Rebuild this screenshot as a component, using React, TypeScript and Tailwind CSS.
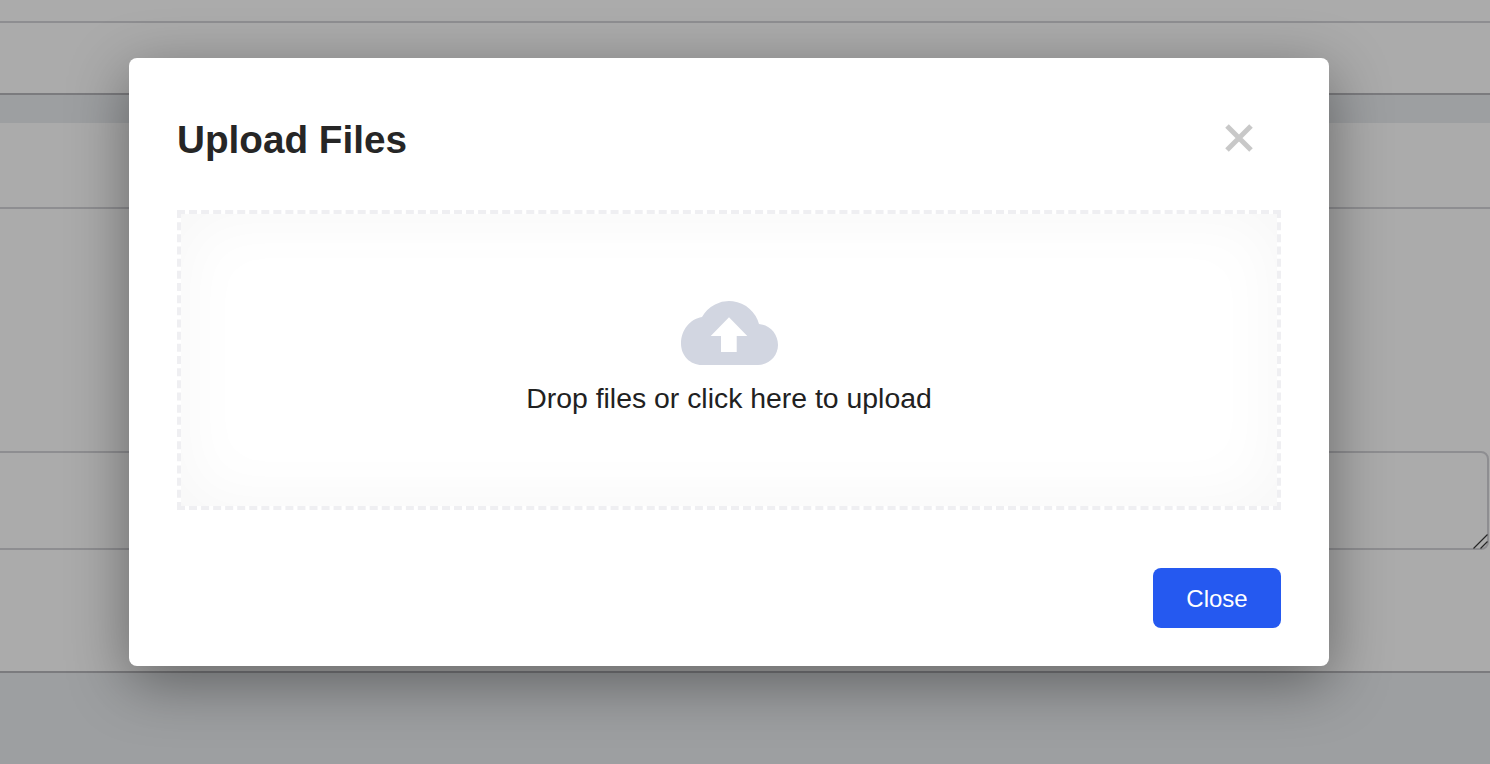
import React from "react"

const CloudIcon = () => (
    <svg width="97" height="65" viewBox="0 0 97 65" className="block">
        <path
            d="M21 65 C9 65 0 55.5 0 43.5 C0 30 9 19 21 17 A31 31 0 0 1 78 24 C89 25 97 34 97 45 C97 56 88 65 77 65 Z"
            fill="#d2d6e1"
        />
        <path d="M48 17.3 L66.3 36 H55.7 V52 H40 V36 H29.7 Z" fill="#ffffff" />
    </svg>
)

const CloseIcon = () => (
    <svg width="30" height="30" viewBox="0 0 30 30" className="block">
        <path d="M3 3 L27 27 M27 3 L3 27" stroke="#c8c8c8" strokeWidth="5" />
    </svg>
)

const ResizeHandle = () => (
    <svg
        width="15"
        height="15"
        viewBox="0 0 15 15"
        className="absolute right-[2px] bottom-[1px]"
    >
        <path
            d="M0.5 14.5 L14.5 0.5 M7.5 14.5 L14.5 7.5"
            stroke="#3a3a3a"
            strokeWidth="1.2"
        />
    </svg>
)

const UploadModal = () => (
    <div className="absolute inset-0 bg-black/[0.33]">
        <div className="ml-[129px] mt-[58px] w-[1200px] h-[608px] bg-white rounded-lg px-12 pt-12 shadow-[0_16px_60px_rgba(0,0,0,0.4)]">
            <div className="flex items-start justify-between h-[104px]">
                <h2 className="text-[38.7px] leading-[64px] mt-[2px] font-bold text-[#262626]">
                    Upload Files
                </h2>
                <button className="mt-[17px] mr-[27px]">
                    <CloseIcon />
                </button>
            </div>
            <div className="h-[300px] border-4 border-dashed border-[#efeff2] shadow-[inset_0_0_70px_#f6f6f6] flex flex-col items-center pt-[86px]">
                <CloudIcon />
                <p className="mt-[15px] text-[28.4px] leading-[36px] text-[#212121]">
                    Drop files or click here to upload
                </p>
            </div>
            <div className="flex justify-end mt-[58px]">
                <button className="w-32 h-[60px] rounded-lg bg-[#2559f0] text-white text-2xl pt-px">
                    Close
                </button>
            </div>
        </div>
    </div>
)

export default function App() {
    return (
        <div className="relative h-[764px] overflow-hidden bg-[#ebeef1] font-['Liberation_Sans',Arial,sans-serif]">
            <div className="h-[23px] bg-white border-b-2 border-[#d4d4d8]" />
            <div className="h-[72px] bg-white border-b-2 border-[#b8b8bc]" />
            <div className="h-[28px] bg-[#ebeef1]" />
            <div className="h-[86px] bg-white border-b-2 border-[#d4d4d8]" />
            <div className="bg-white h-[242px]" />
            <div className="relative bg-white h-[99px] flex">
                <textarea className="w-[calc(100%+11px)] shrink-0 h-full border-2 border-[#d4d4d8] rounded-lg -ml-3 outline-none resize-none" />
                <ResizeHandle />
            </div>
            <div className="h-[123px] bg-white border-b-2 border-[#b8b8bc]" />
            <UploadModal />
        </div>
    )
}
